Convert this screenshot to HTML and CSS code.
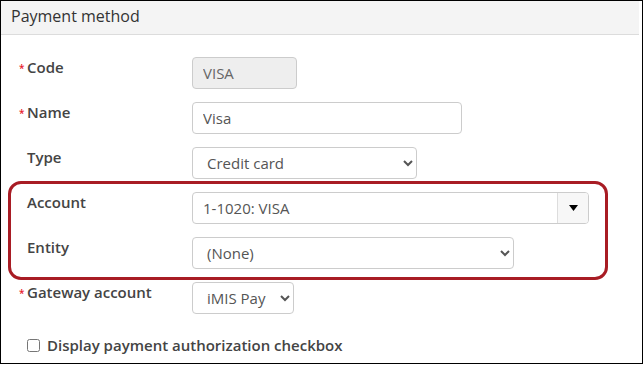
FILE: index.html
```html
<!DOCTYPE html>
<html>
<head>
<meta charset="utf-8">
<link rel="stylesheet" href="styles.css">
</head>
<body>
<div class="frame">
  <div class="panel">
    <div class="panel-head">Payment method</div>
    <div class="panel-body">
      <div class="form">
        <div class="label"><span class="req">*</span>Code</div>
        <div class="field"><input class="ctl w-code" type="text" value="VISA" disabled></div>

        <div class="label"><span class="req">*</span>Name</div>
        <div class="field"><input class="ctl w-name" type="text" value="Visa"></div>

        <div class="label"><span class="req"></span>Type</div>
        <div class="field"><select class="ctl sel w-type"><option>Credit card</option></select></div>

        <div class="label"><span class="req"></span>Account</div>
        <div class="field">
          <div class="combo w-acct">
            <span class="combo-text">1-1020: VISA</span>
            <span class="combo-btn"><svg width="9" height="6" viewBox="0 0 9 6"><path d="M0 0H9L4.5 6Z" fill="#000"/></svg></span>
          </div>
        </div>

        <div class="label"><span class="req"></span>Entity</div>
        <div class="field"><select class="ctl sel w-entity"><option>(None)</option></select></div>

        <div class="label"><span class="req">*</span>Gateway account</div>
        <div class="field"><select class="ctl sel w-gate"><option>iMIS Pay</option></select></div>
      </div>
      <label class="check-row"><input type="checkbox" class="cb"><span>Display payment authorization checkbox</span></label>
    </div>
  </div>
  <div class="highlight"></div>
</div>
</body>
</html>
```

FILE: styles.css
```css
html, body {
  margin: 0;
  padding: 0;
  background: #fff;
}
body {
  font-family: "Open Sans", "Liberation Sans", sans-serif;
  color: #444;
}
.frame {
  position: relative;
  width: 641px;
  height: 362px;
  border: 1px solid #000;
  overflow: hidden;
}
.panel {
  width: 638px;
}
.panel-head {
  height: 33px;
  background: #f4f4f4;
  border-bottom: 1px solid #dcdcdc;
  font-size: 16px;
  line-height: 30px;
  padding-left: 10px;
  color: #333;
}
.panel-body {
  padding: 22px 0 0 18px;
}
.form {
  display: grid;
  grid-template-columns: 173px auto;
  row-gap: 13px;
}
.label {
  font-size: 15px;
  font-weight: 600;
  line-height: 20px;
  color: #444;
  display: flex;
}
.req {
  display: inline-block;
  width: 8px;
  padding-top: 3px;
  color: #e8202a;
  font-size: 10px;
  line-height: 16px;
}
.field {
  display: flex;
}
.ctl {
  box-sizing: border-box;
  height: 32px;
  border: 1px solid #ccc;
  border-radius: 4px;
  padding: 0 10px;
  font-family: "Open Sans", "Liberation Sans", sans-serif;
  font-size: 15px;
  color: #555;
  background: #fff;
  margin: 0;
}
.ctl:disabled {
  background: #eee;
  color: #666;
}
.sel {
  padding-left: 10px;
  padding-right: 4px;
}
.w-code { width: 105px; }
.w-name { width: 270px; }
.w-type { width: 225px; }
.w-entity { width: 322px; }
.w-gate { width: 102px; }
.w-acct { width: 397px; }
.combo {
  box-sizing: border-box;
  height: 32px;
  border: 1px solid #ccc;
  border-radius: 4px;
  display: flex;
  align-items: stretch;
  font-size: 15px;
  color: #555;
  overflow: hidden;
}
.combo-text {
  flex: 1;
  padding-left: 10px;
  line-height: 30px;
}
.combo-btn {
  width: 30px;
  background: #f7f7f7;
  border-left: 1px solid #ddd;
  display: flex;
  align-items: center;
  justify-content: center;
}
.check-row {
  display: flex;
  align-items: center;
  gap: 7px;
  margin-top: 21px;
  margin-left: 8px;
  font-size: 15px;
  font-weight: 600;
  line-height: 20px;
  color: #444;
}
.cb {
  margin: 0;
  width: 13px;
  height: 13px;
}
.highlight {
  position: absolute;
  left: 7px;
  top: 180px;
  width: 594px;
  height: 93px;
  border: 3px solid #a81c24;
  border-radius: 13px;
  pointer-events: none;
}
```
